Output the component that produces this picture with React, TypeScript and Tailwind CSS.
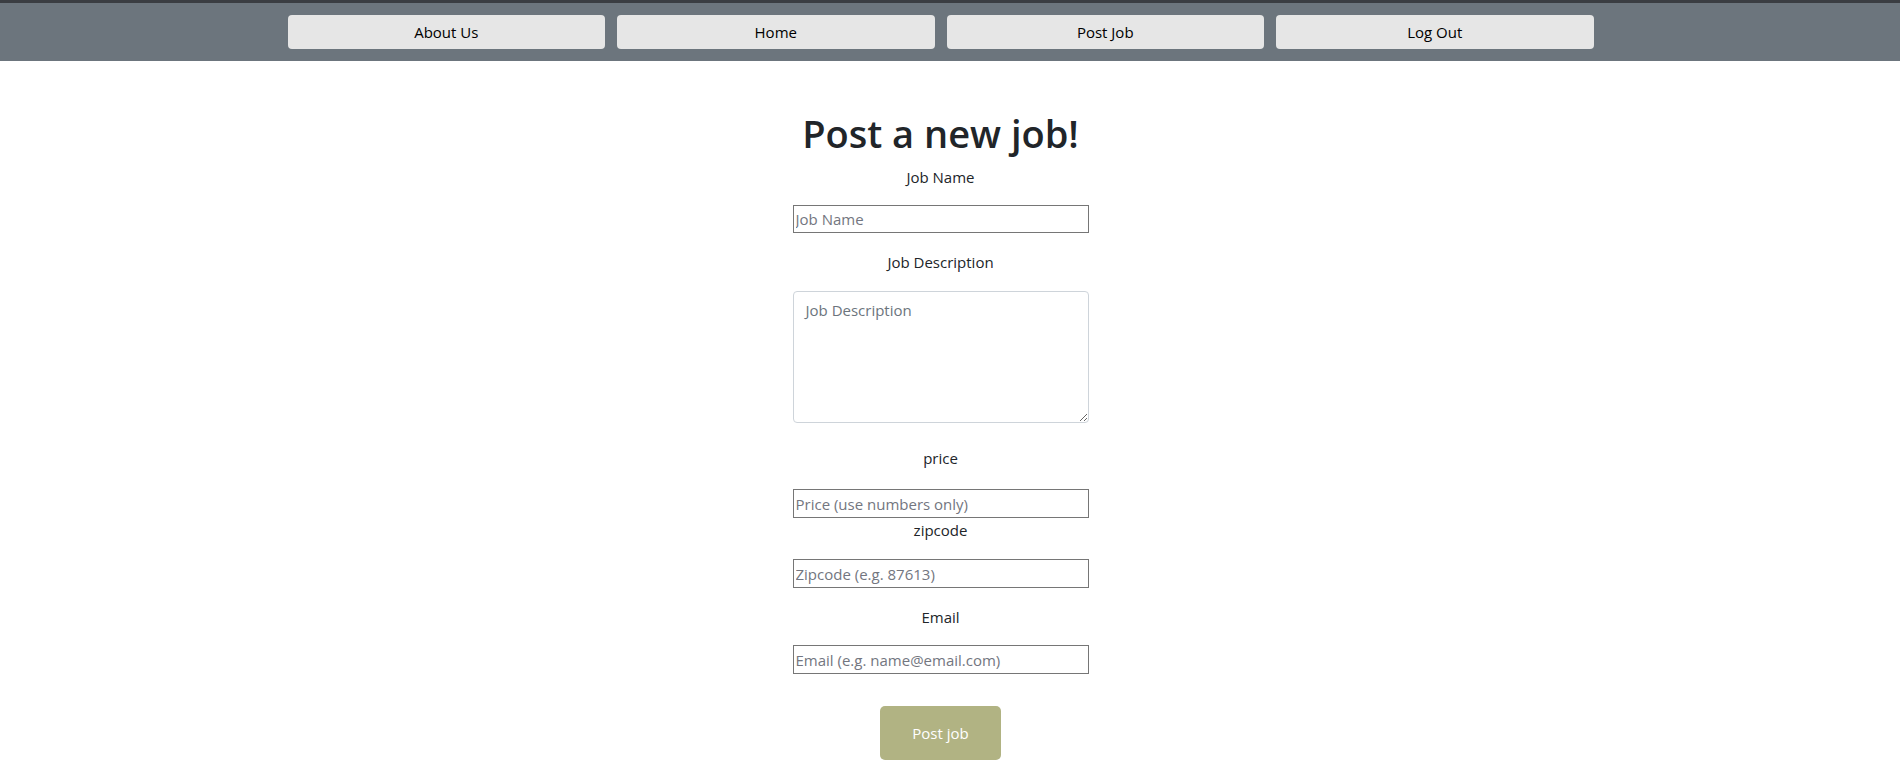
import React from "react";

const font = { fontFamily: '"Open Sans", "Noto Sans", sans-serif' };

export default function App() {
  const navItems = ["About Us", "Home", "Post Job", "Log Out"];
  return (
    <div className="w-[1900px] h-[772px] overflow-hidden bg-white text-[#212529]" style={font}>
      <nav className="h-[61px] bg-[#6c757d] border-t-[3px] border-[#3a3d42]">
        <div className="w-[1881px] flex justify-center pt-[12px]">
          <div className="grid grid-cols-4 gap-[12px] w-[1306px]">
            {navItems.map((t) => (
              <button
                key={t}
                className="h-[34px] rounded-[4px] bg-[#e6e6e6] text-[15px] text-black"
              >
                {t}
              </button>
            ))}
          </div>
        </div>
      </nav>
      <main className="w-[1881px] flex flex-col items-center pt-[48px]">
        <h1 className="text-[38px] leading-[48px] font-semibold mb-[8px]">Post a new job!</h1>
        <label className="text-[15px] leading-[24px]">Job Name</label>
        <input
          className="mt-[16px] w-[296px] h-[28px] border border-[#767676] px-[2px] text-[15px] placeholder:text-[#737680] outline-none"
          placeholder="Job Name"
        />
        <label className="mt-[17px] text-[15px] leading-[24px]">Job Description</label>
        <textarea
          className="mt-[17px] w-[296px] h-[132px] border border-[#ced4da] rounded-[4px] px-[12px] py-[6px] text-[15px] leading-[24px] placeholder:text-[#6c757d] outline-none"
          placeholder="Job Description"
        />
        <label className="mt-[23px] text-[15px] leading-[24px]">price</label>
        <input
          className="mt-[19px] w-[296px] h-[29px] border border-[#767676] px-[2px] text-[15px] placeholder:text-[#737680] outline-none"
          placeholder="Price (use numbers only)"
        />
        <label className="text-[15px] leading-[24px]">zipcode</label>
        <input
          className="mt-[17px] w-[296px] h-[29px] border border-[#767676] px-[2px] text-[15px] placeholder:text-[#737680] outline-none"
          placeholder="Zipcode (e.g. 87613)"
        />
        <label className="mt-[17px] text-[15px] leading-[24px]">Email</label>
        <input
          className="mt-[16px] w-[296px] h-[29px] border border-[#767676] px-[2px] text-[15px] placeholder:text-[#737680] outline-none"
          placeholder="Email (e.g. name@email.com)"
        />
        <button className="mt-[32px] w-[121px] h-[54px] rounded-[5px] bg-[#b1b383] text-white text-[15px]">
          Post job
        </button>
      </main>
    </div>
  );
}
